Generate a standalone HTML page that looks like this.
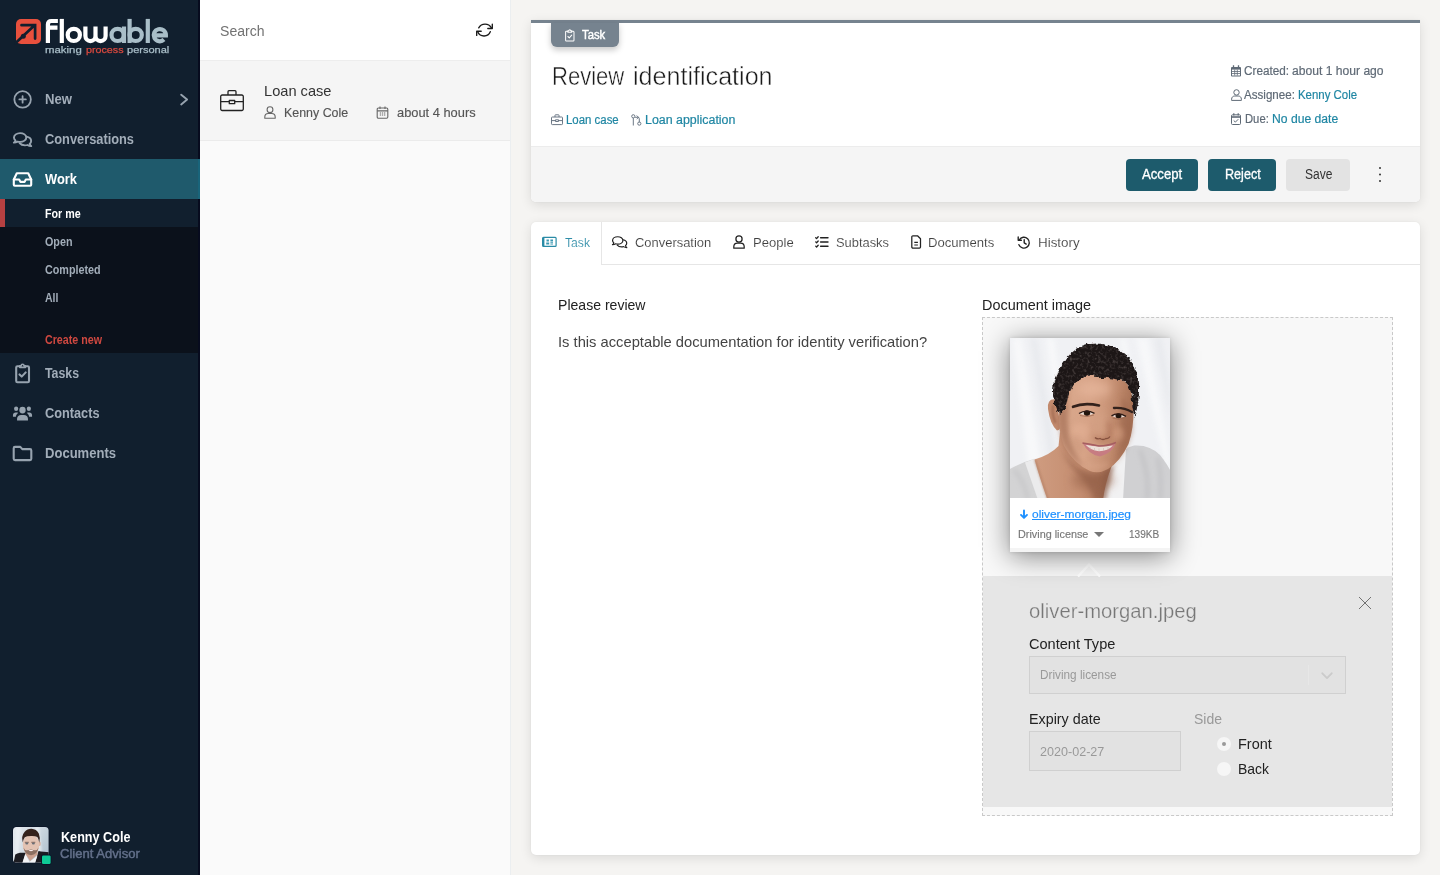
<!DOCTYPE html>
<html><head><meta charset="utf-8"><title>Flowable Work</title>
<style>
*{box-sizing:border-box;margin:0;padding:0}
html,body{width:1440px;height:875px;overflow:hidden}
body{position:relative;background:#f5f4f2;font-family:"Liberation Sans",sans-serif}
.a{position:absolute}
.t{position:absolute;white-space:pre;line-height:1em;transform-origin:0 50%;display:block}
svg{position:absolute;overflow:visible}

</style></head>
<body>
<!-- ===== sidebar ===== -->
<div class="a" style="left:0;top:0;width:200px;height:875px;background:#111f2e;border-right:2px solid #070b1e"></div>
<div class="a" style="left:0;top:159px;width:200px;height:40px;background:#1f5a6c;border-right:2px solid #19647a"></div>
<div class="a" style="left:0;top:199px;width:198px;height:154px;background:#0b111b"></div>
<div class="a" style="left:0;top:199px;width:198px;height:28px;background:#111f2e"></div>
<div class="a" style="left:0;top:199px;width:5px;height:28px;background:#b64041"></div>

<!-- logo -->
<svg style="left:0;top:0" width="200" height="70" viewBox="0 0 200 70" id="logo">
  <path d="M21 19h15a5 5 0 0 1 5 5v15a5 5 0 0 1-5 5H21l-5-1.5V24a5 5 0 0 1 5-5z" fill="#e8503d"/>
  <path d="M15.6 43 34.6 25.2M21.5 25.2h13.6v13.4" fill="none" stroke="#111f2e" stroke-width="2.7" stroke-linecap="round"/>
  <circle cx="23.3" cy="36.3" r="2.5" fill="#111f2e"/>
  <g fill="none" stroke="#fff" stroke-width="4.2">
    <path d="M47.9 43V24.5q0-3.5 3.5-3.5h6.5M47.9 27.6h9.6"/>
    <path d="M61.8 18.9V43"/>
    <circle cx="73.8" cy="34.9" r="6.1"/>
    <path d="M85.4 26.5V36a5.05 5.05 0 0 0 10.1 0V26.5M95.5 36a5.05 5.05 0 0 0 10.1 0V26.5"/>
  </g>
  <g fill="none" stroke="#a9bec8" stroke-width="4.2">
    <circle cx="117.6" cy="34.9" r="6.1"/><path d="M124 26.5V43"/>
    <path d="M129.6 18.9V43"/><circle cx="135.7" cy="34.9" r="6.1"/>
    <path d="M147.8 18.9V43"/>
    <path d="M154 35.4h11.9a6.1 6.1 0 1 0-1.9 4.2"/>
  </g>
</svg>

<!-- sidebar icons -->
<svg style="left:0;top:79px" width="200" height="400" viewBox="0 79 200 400" fill="none" stroke="#97a3af" stroke-width="1.8" stroke-linecap="round" stroke-linejoin="round" id="sideicons">
  <circle cx="22.600" cy="99.450" r="8.250"/><path d="M22.600 96.200v6.500M19.350 99.450h6.500"/>
  <path d="M181.200 94.700l5.900 4.900-5.900 4.900" stroke-width="1.900"/>
  <!-- conversations -->
<g transform="matrix(.95 0 0 .875 1.130 18.010)" stroke-width="2">  <path d="M20 131.5c-3.6 0-6.5 2.3-6.5 5.1 0 1.300.6 2.400 1.600 3.300-.300 1-.9 1.900-1.700 2.600 1.500 0 2.900-.500 4-1.300.800.300 1.700.400 2.600.400 3.600 0 6.500-2.300 6.500-5.100s-2.900-5-6.500-5z"/>
  <path d="M26.700 135.600c2.800.500 4.900 2.500 4.900 4.900 0 1.300-.6 2.400-1.600 3.300.300 1 .9 1.900 1.700 2.600-1.500 0-2.900-.500-4-1.300-.800.300-1.700.400-2.600.400-2.400 0-4.500-1-5.600-2.500"/></g>
  <!-- work inbox -->
  <g stroke="#fff" stroke-width="2.1"><path d="M13.800 179.500l3-6.300h11.400l3 6.300v5.200a1 1 0 0 1-1 1H14.800a1 1 0 0 1-1-1z"/><path d="M13.800 179.500h5.400l1.200 2.400h4.200l1.200-2.400h5.400"/></g>
  <!-- tasks clipboard -->
<g stroke-width="2.100"><path d="M19.600 366.200h-2.200a1.200 1.200 0 0 0-1.200 1.200v13.600a1.200 1.200 0 0 0 1.200 1.200h10.400a1.200 1.200 0 0 0 1.200-1.200v-13.600a1.200 1.200 0 0 0-1.200-1.200h-2.200"/>
  <path d="M19.800 367.400v-1.700h1.400a1.400 1.400 0 0 1 2.800 0h1.400v1.700z" stroke-width="1.600"/>
  <path d="M19.500 374.400l2.200 2.200 4-4.200"/></g>
  <!-- contacts -->
  <g fill="#97a3af" stroke="none" transform="matrix(.91 0 0 .97 2.030 12.700)"><circle cx="22.500" cy="409.700" r="3.500"/><path d="M16.500 420.500v-1.800c0-2.400 2-4 4.400-4h3.200c2.400 0 4.400 1.600 4.400 4v1.800z"/><circle cx="15.500" cy="408.300" r="2.300"/><circle cx="29.500" cy="408.300" r="2.300"/><path d="M12 416.500v-1.600c0-1.600 1.300-2.700 2.900-2.700h1.400c.5 0 1 .1 1.400.4-1.500 1-2.400 2.400-2.500 3.900zM33 416.500v-1.600c0-1.600-1.300-2.700-2.900-2.700h-1.400c-.5 0-1 .1-1.400.4 1.500 1 2.400 2.400 2.500 3.900z"/></g>
  <!-- documents folder -->
  <path d="M15 446.900h5.300l2 2.200h7.700a1.300 1.300 0 0 1 1.300 1.300v8.400a1.300 1.300 0 0 1-1.300 1.300H15a1.300 1.300 0 0 1-1.300-1.300V448.200a1.300 1.300 0 0 1 1.300-1.300z" stroke-width="2.100"/>
</svg>

<!-- user avatar -->
<svg style="left:12.700px;top:827.400px" width="39" height="39" viewBox="0 0 39 39" id="avatar">
  <defs><clipPath id="avc"><rect x="0" y="0" width="35.600" height="35.600" rx="3.500"/></clipPath>
  <linearGradient id="avbg" x1="0" y1="0" x2="1" y2=".6"><stop offset="0" stop-color="#e4e9ee"/><stop offset=".5" stop-color="#d3dce4"/><stop offset="1" stop-color="#b4c4d1"/></linearGradient>
  <filter id="avb" filterUnits="userSpaceOnUse" x="-5" y="-5" width="50" height="50"><feGaussianBlur stdDeviation=".6"/></filter>
  <filter id="avb2" filterUnits="userSpaceOnUse" x="-5" y="-5" width="50" height="50"><feGaussianBlur stdDeviation="1.300"/></filter></defs>
  <rect x="-.7" y="-.7" width="37" height="37" rx="4.200" fill="#0a1326"/>
  <g clip-path="url(#avc)">
    <rect width="36" height="36" fill="url(#avbg)"/>
    <path d="M3 0h5l-3 36H0zM22 0h4l4 36h-5z" fill="#eef2f5" opacity=".7" filter="url(#avb2)"/>
    <g filter="url(#avb)">
    <path d="M.5 36L2.300 27.600Q4 26 7 25.700H13L9.400 36z" fill="#1b1b20"/>
    <path d="M22 36L25.500 24 28 24.600 36 25.300V36z" fill="#1b1b20"/>
    <path d="M9.400 36L12.300 26.500 16.500 35 24.500 28.500 22 36z" fill="#f4f4f5"/>
    <path d="M12 22h12.500v5.500L17 34l-4.500-7z" fill="#caa08e"/>
    <ellipse cx="26.500" cy="16.800" rx="1.300" ry="2.300" fill="#d9b3a2"/>
    <ellipse cx="18" cy="17.800" rx="8.300" ry="10.300" fill="#e3c3b3"/>
    <path d="M10.500 20.500Q11.500 27.500 18 28.300 24.500 27.500 25.500 20.500 24 24.500 20.500 22.800 18 22 15.500 22.800 12 24.500 10.500 20.500z" fill="#7d6053" opacity=".85"/>
    <path d="M14.800 22.600Q18 25.800 21.200 22.600 18 23.400 14.800 22.600z" fill="#fbeeee"/>
    <path d="M9.800 15.500Q8 9 11.500 5 14.500 1.500 18.500 1.700 23.500 2 25.800 6.500 27.500 10.500 26.300 15.800 25.800 12 24.300 10 22 8.800 18 9 13.500 9 11.800 10.200 10.300 12.300 9.800 15.500z" fill="#35241f"/>
    <path d="M11.800 15.300h4M18.300 15.300h4" stroke="#6d5348" stroke-width=".8"/>
    <ellipse cx="13.800" cy="16.500" rx="1.500" ry=".9" fill="#6b6f78"/><ellipse cx="20.400" cy="16.500" rx="1.500" ry=".9" fill="#6b6f78"/>
    </g>
  </g>
  <rect x="28.200" y="27.600" width="10.200" height="10.200" rx="2" fill="#0a1326"/>
  <rect x="29" y="28.400" width="8.600" height="8.600" rx="1.300" fill="#0ecb97"/>
</svg>

<!-- ===== list panel ===== -->
<div class="a" style="left:200px;top:0;width:311px;height:875px;background:#fafafa;border-right:1px solid #ebeef0"></div>
<div class="a" style="left:200px;top:0;width:310px;height:61px;background:#fff;border-bottom:1px solid #ededed"></div>
<div class="a" style="left:200px;top:61px;width:310px;height:80px;background:#f5f5f5;border-bottom:1px solid #ebebeb"></div>
<svg style="left:475.800px;top:22.200px" width="17" height="15" viewBox="0 0 17 15" fill="none" stroke="#1a1a1a" stroke-width="1.350" stroke-linecap="round" stroke-linejoin="round" id="refresh">
  <path d="M2.700 5.800A7.300 7.300 0 0 1 15.400 5.800M14.300 9.700A6.800 6.800 0 0 1 1.800 10"/><path d="M16.300 2.200V6.500H11.800M.700 13.400V9.200H5.200"/>
</svg>
<svg style="left:220px;top:90px" width="24" height="22" viewBox="0 0 24 22" fill="none" stroke="#222" stroke-width="1.3" stroke-linejoin="round" id="brief">
  <path d="M2.200 5h19.600a1.500 1.500 0 0 1 1.500 1.500v12.500a1.500 1.500 0 0 1-1.500 1.500H2.200a1.500 1.500 0 0 1-1.500-1.500V6.500A1.500 1.500 0 0 1 2.200 5z"/><path d="M8 5V1.700a1 1 0 0 1 1-1h6a1 1 0 0 1 1 1V5"/><path d="M.7 11.700h8.600M14.700 11.700h8.600M9.300 10.500h5.400v3.200H9.300z"/>
</svg>
<svg style="left:264px;top:106px" width="12" height="13" viewBox="0 0 12 13" fill="none" stroke="#666" stroke-width="1.100" id="lu">
  <circle cx="6" cy="3.700" r="2.900"/><path d="M.8 12.300v-1.300c0-2.300 1.700-3.500 3.500-3.500h3.400c1.800 0 3.500 1.200 3.500 3.500v1.300z" stroke-linejoin="round"/>
</svg>
<svg style="left:376px;top:106px" width="13" height="13" viewBox="0 0 13 13" fill="none" stroke="#666" stroke-width="1.100" id="lc">
  <rect x="1.200" y="2" width="10.600" height="10.300" rx="1.200"/><path d="M1.200 4.900h10.600M4 .5v2.500M9 .5v2.500"/><path d="M3.800 7h1.300M5.900 7h1.300M8 7h1.300M3.800 9h1.300M5.900 9h1.300M8 9h1.300" stroke-width="1.200"/>
</svg>

<!-- ===== header card ===== -->
<div class="a" style="left:531px;top:20px;width:889px;height:182px;background:#fff;border-top:3px solid #76838f;border-radius:0 0 5px 5px;box-shadow:0 3px 12px rgba(0,0,0,.11),0 0 2px rgba(0,0,0,.05);overflow:hidden"><div class="a" style="left:0;top:123px;width:889px;height:56px;background:#f5f5f5;border-top:1px solid #ececec"></div></div>
<div class="a" style="left:551px;top:23px;width:68px;height:24px;background:#76838f;border-radius:0 0 6px 6px;box-shadow:0 3px 6px rgba(0,0,0,.22)"></div>
<svg style="left:564.800px;top:28.900px" width="9.600" height="12.800" viewBox="0 0 11 14" preserveAspectRatio="none" fill="none" stroke="#fff" stroke-width="1.150" stroke-linejoin="round" stroke-linecap="round" id="badgeic">
  <path d="M3.300 2.500H1.500a.8.8 0 0 0-.8.800v9a.8.8 0 0 0 .8.800h8a.8.8 0 0 0 .8-.8v-9a.8.8 0 0 0-.8-.8H7.700"/><path d="M3.300 3.600V2h1.100a1.100 1.100 0 0 1 2.200 0h1.100v1.600z"/><path d="M3.300 8.200l1.600 1.500 2.800-3"/>
</svg>
<!-- header link icons -->
<svg style="left:551px;top:114px" width="12" height="12" viewBox="0 0 12 12" fill="none" stroke="#6b7785" stroke-width="1" stroke-linejoin="round" id="hl1">
  <path d="M1.300 3h9.400a.8.8 0 0 1 .8.800v6a.8.8 0 0 1-.8.800H1.300a.8.8 0 0 1-.8-.8v-6a.8.8 0 0 1 .8-.8z"/><path d="M4 3V1.300a.5.5 0 0 1 .5-.5h3a.5.5 0 0 1 .5.5V3M.5 6.600h4M7.500 6.600h4M4.500 5.800h3v1.700h-3z"/>
</svg>
<svg style="left:631px;top:114px" width="11" height="12" viewBox="0 0 11 12" fill="none" stroke="#6b7785" stroke-width="1" id="hl2">
  <circle cx="2.300" cy="2.300" r="1.600"/><path d="M2.300 3.900v7.600"/><circle cx="8.300" cy="9.600" r="1.600"/><path d="M6 1.800l1.500 1.500-1.500 1.500M4.500 3.300h2.300a1.500 1.500 0 0 1 1.500 1.500V8" stroke-linecap="round" stroke-linejoin="round"/>
</svg>
<!-- header meta icons -->
<svg style="left:1231px;top:65px" width="10" height="12" viewBox="0 0 10 12" id="hm1"><path d="M1 2h8a1 1 0 0 1 1 1v7.500a1 1 0 0 1-1 1H1a1 1 0 0 1-1-1V3a1 1 0 0 1 1-1z" fill="#5f6a76"/><path d="M2.500.3v2.500M7.500.3v2.500" stroke="#5f6a76" stroke-width="1.300"/><path d="M1 4.600h8v5.900H1z" fill="#fff"/><path d="M1 6.500h8M1 8.500h8M3.700 4.600v5.900M6.300 4.600v5.900" stroke="#5f6a76" stroke-width=".8"/></svg>
<svg style="left:1231px;top:89px" width="11" height="12" viewBox="0 0 11 12" fill="none" stroke="#5f6a76" stroke-width="1" id="hm2"><circle cx="5.500" cy="3.400" r="2.700"/><path d="M.6 11.400v-1.200c0-2.100 1.500-3.200 3.200-3.200h3.400c1.700 0 3.200 1.100 3.200 3.200v1.200z" stroke-linejoin="round"/></svg>
<svg style="left:1231px;top:113px" width="10" height="12" viewBox="0 0 10 12" fill="none" stroke="#5f6a76" stroke-width="1" id="hm3"><rect x=".5" y="1.800" width="9" height="9.700" rx="1"/><path d="M.5 4h9" stroke-width="1.600"/><path d="M2.800.3v2.200M7.200.3v2.200" stroke-width="1.200"/><path d="M3 7.800l1.400 1.300L7 6.500" stroke-linecap="round" stroke-linejoin="round"/></svg>
<!-- buttons -->
<div class="a" style="left:1126px;top:159px;width:72px;height:32px;background:#1d5b6c;border-radius:4px"></div>
<div class="a" style="left:1208px;top:159px;width:68px;height:32px;background:#1d5b6c;border-radius:4px"></div>
<div class="a" style="left:1286px;top:159px;width:64px;height:32px;background:#e3e3e3;border-radius:4px"></div>
<div class="a" style="left:1378.700px;top:166.500px;width:2.800px;height:2.800px;background:#333;border-radius:2px;box-shadow:0 6.500px 0 #333,0 13px 0 #333"></div>

<!-- ===== tab card ===== -->
<div class="a" style="left:531px;top:222px;width:889px;height:633px;background:#fff;border-radius:5px;box-shadow:0 3px 12px rgba(0,0,0,.11),0 0 2px rgba(0,0,0,.05)"></div>
<div class="a" style="left:601px;top:222px;width:819px;height:43px;border-left:1px solid #e6e6e6;border-bottom:1px solid #e6e6e6"></div>
<!-- tab icons -->
<svg style="left:542.300px;top:236px" width="15" height="12" viewBox="0 0 15 12" fill="none" stroke="#2a8ba6" stroke-width="1.200" id="ti1"><rect x=".6" y="1.300" width="13.500" height="9.100" rx=".9"/><path d="M1.700 1.300v9.100" stroke-width="1.400"/><path d="M4.500 3.600h2.400v1.800H4.500zM4.200 6.400h3v2H4.200zM8.400 3.600h2.600v1.300H8.400zM8.400 5.600h2.600v1.100H8.400zM8.400 7.400h2.600v1H8.400z" fill="#3a97b1" stroke="none"/></svg>
<svg style="left:611.700px;top:235.800px" width="15.300" height="12.300" viewBox="0 0 16 14" preserveAspectRatio="none" fill="none" stroke="#222" stroke-width="1.250" stroke-linejoin="round" stroke-linecap="round" id="ti2">
  <path d="M6 .800C3 .800.600 2.700.600 5c0 1.100.500 2 1.300 2.800-.200.800-.700 1.600-1.400 2.200 1.300 0 2.400-.400 3.400-1.100.700.200 1.400.300 2.100.300 3 0 5.400-1.900 5.400-4.200S9 .800 6 .800z"/><path d="M11.600 4.300c2.200.500 3.800 2 3.800 3.900 0 1.100-.500 2-1.300 2.800.200.800.700 1.600 1.400 2.200-1.300 0-2.400-.400-3.400-1.100-.700.200-1.400.300-2.100.300-1.900 0-3.600-.800-4.500-2"/>
</svg>
<svg style="left:733px;top:235px" width="12" height="14" viewBox="0 0 12 14" fill="none" stroke="#222" stroke-width="1.250" id="ti3"><circle cx="6" cy="3.900" r="3.100"/><path d="M.800 13.200v-1.400c0-2.400 1.700-3.700 3.600-3.700h3.200c1.900 0 3.600 1.300 3.600 3.700v1.400z" stroke-linejoin="round"/></svg>
<svg style="left:815px;top:236px" width="14" height="12" viewBox="0 0 14 12" fill="none" stroke="#222" stroke-width="1.400" stroke-linecap="round" stroke-linejoin="round" id="ti4"><path d="M5.600 1.800h7.400M5.600 6h7.400M5.600 10.200h7.400"/><path d="M.700 1.700l.9.900L3.200.800M.700 5.900l.9.900L3.200 5M.700 10.100l.9.900 1.600-1.800" stroke-width="1.300"/></svg>
<svg style="left:910.500px;top:235px" width="11" height="14" viewBox="0 0 11 14" fill="none" stroke="#222" stroke-width="1.250" stroke-linejoin="round" id="ti5"><path d="M1.900.800h4.600l3 3v8.300a1.100 1.100 0 0 1-1.100 1.100H1.900a1.100 1.100 0 0 1-1.100-1.100V1.900A1.100 1.100 0 0 1 1.900.800z"/><path d="M3.300 7.300h3.600M3.300 10h3.600" stroke-width="1.200"/></svg>
<svg style="left:1016.500px;top:235.500px" width="14" height="13" viewBox="0 0 14 13" fill="none" stroke="#222" stroke-width="1.350" stroke-linecap="round" stroke-linejoin="round" id="ti6"><path d="M2.300 3.800A5.400 5.400 0 1 1 1.900 8.700"/><path d="M1.200 1v3.200h3.200"/><path d="M7.200 3.700v3.100l2 1.300" stroke-width="1.400"/></svg>

<!-- ===== document area ===== -->
<div class="a" style="left:982px;top:317px;width:411px;height:499px;background:#f8f8f8;border:1px dashed #c9c9c9"></div>
<div class="a" style="left:983px;top:576px;width:409px;height:231px;background:#e6e6e6"></div>
<svg style="left:1077px;top:563px" width="24" height="14" viewBox="0 0 24 14" fill="none" stroke="#fff" stroke-width="2.400" id="ptr"><path d="M1 13.500L12 1.500l11 12"/></svg>
<!-- image card -->
<div class="a" style="left:1010px;top:338px;width:160px;height:214px;background:#fff;box-shadow:0 4px 26px rgba(0,0,0,.48),0 0 4px rgba(0,0,0,.12)"><div class="a" style="left:0;bottom:0;width:160px;height:4px;background:#f4f4f4"></div></div>
<svg style="left:1010px;top:338px" width="160" height="160" viewBox="0 0 160 160" id="photo">
  <defs>
    <clipPath id="pc"><rect width="160" height="160"/></clipPath>
    <filter id="pb0" filterUnits="userSpaceOnUse" x="-20" y="-20" width="200" height="200"><feGaussianBlur stdDeviation=".5"/></filter>
    <filter id="pb1" filterUnits="userSpaceOnUse" x="-20" y="-20" width="200" height="200"><feGaussianBlur stdDeviation="1"/></filter>
    <filter id="pb2" filterUnits="userSpaceOnUse" x="-20" y="-20" width="200" height="200"><feGaussianBlur stdDeviation="2.500"/></filter>
    <filter id="pb3" filterUnits="userSpaceOnUse" x="-20" y="-20" width="200" height="200"><feGaussianBlur stdDeviation="5"/></filter>
    <filter id="phair" x="-10%" y="-10%" width="120%" height="120%"><feTurbulence type="fractalNoise" baseFrequency=".22" numOctaves="2" seed="7" result="n"/><feDisplacementMap in="SourceGraphic" in2="n" scale="5" xChannelSelector="R" yChannelSelector="G"/><feGaussianBlur stdDeviation=".45"/></filter>
    <filter id="pcurl" x="0" y="0" width="100%" height="100%"><feTurbulence type="fractalNoise" baseFrequency=".35" numOctaves="2" seed="3"/><feColorMatrix type="matrix" values="0 0 0 0 .32  0 0 0 0 .26  0 0 0 0 .25  1.600 0 0 0 -.75"/><feComposite in2="SourceGraphic" operator="in"/></filter>
    <linearGradient id="pface" x1="0" y1="0" x2="1" y2=".15"><stop offset="0" stop-color="#c18c70"/><stop offset=".22" stop-color="#d8a68a"/><stop offset=".45" stop-color="#d7a387"/><stop offset=".65" stop-color="#cc977a"/><stop offset=".82" stop-color="#bd876a"/><stop offset="1" stop-color="#a87256"/></linearGradient>
    <linearGradient id="pneck" x1="0" y1="0" x2="1" y2="0"><stop offset="0" stop-color="#cf9c80"/><stop offset=".55" stop-color="#c48d70"/><stop offset="1" stop-color="#a06a50"/></linearGradient>
  </defs>
  <g clip-path="url(#pc)">
    <rect width="160" height="160" fill="#f0f1f4"/>
    <g filter="url(#pb2)" opacity=".7"><path d="M2 0h10l24 160H22zM36 0h8l16 100H50zM126 0h12l22 120v30zM110 0h6l10 60h-6z" fill="#fafbfc"/><path d="M20 0h7l22 130h-9zM144 0h8l8 50v30z" fill="#e6e8ec"/></g>
    <!-- shirt -->
    <g filter="url(#pb0)">
    <path d="M-2 132 Q12 124 24 121 L42 162H-2z" fill="#d3d3d4"/>
    <path d="M94 162 L107 122 Q113 110 124 107.500 Q140 106.500 150 117 Q158 127 162 136V162z" fill="#d0d0d2"/>
    <path d="M92 162 L103 126 Q108 116 116 111 L113 162z" fill="#f1f1f2"/>
    <path d="M15 124.500 L24 121 L38 162H28z" fill="#ebebec"/>
    </g>
    <path d="M130 112 Q140 138 137 162M148 120 Q152 140 150 162" stroke="#bdbdc0" stroke-width="2.500" fill="none" filter="url(#pb2)"/>
    <path d="M4 132 Q14 142 18 162" stroke="#c2c2c4" stroke-width="2.500" fill="none" filter="url(#pb2)"/>
    <!-- neck / chest -->
    <path d="M24.500 121.500 Q40 117 48.500 108 L50 94 L108 110 L101 130 Q95 146 93 162 L37.500 162 Q29 138 24.500 121.500z" fill="url(#pneck)" filter="url(#pb0)"/>
    <path d="M50 108 Q60 128 82 138 Q96 138 106 122 L100 134 Q95 148 94 162 H84 Q80 146 66 134 Q56 124 50 108z" fill="#8f5c45" opacity=".6" filter="url(#pb2)"/>
    <ellipse cx="83" cy="142" rx="21" ry="9" fill="#96624a" opacity=".55" filter="url(#pb3)"/>
    <path d="M101 128 Q95 146 93.500 162" stroke="#84543f" stroke-width="6" fill="none" opacity=".5" filter="url(#pb2)"/>
    <path d="M25 122 Q31 140 38 162" stroke="#a8745a" stroke-width="1.500" fill="none" opacity=".7" filter="url(#pb1)"/>
    <!-- ear -->
    <path d="M46 61.500 Q37 60 38 71 Q40 86 47 92.500 Q52 92 50 84z" fill="#c28a6d" filter="url(#pb0)"/>
    <path d="M43.500 67 Q41 74 45.500 85" stroke="#9c664d" stroke-width="1.800" fill="none" filter="url(#pb1)"/>
    <!-- face -->
    <path d="M57 50 Q62 38 80 36.500 Q104 36 116 44 Q123 52 123.500 70 Q124 90 118.500 106 Q110 124 98 131 Q88 136.500 80 133 Q64 126 54 108 Q48 92 49 76 Q50 60 57 50z" fill="url(#pface)" filter="url(#pb0)"/>
    <path d="M49 74 Q48 96 55 110 Q62 122 74 130 Q63 114 59 96 Q57 84 58 62z" fill="#a06c52" opacity=".6" filter="url(#pb2)"/>
    <path d="M112 58 Q124 72 122 94 Q118 110 104 127 Q114 104 111 84z" fill="#99644b" opacity=".5" filter="url(#pb2)"/>
    <ellipse cx="84" cy="51" rx="17" ry="8" fill="#e6b69b" opacity=".75" filter="url(#pb3)"/>
    <ellipse cx="70" cy="93" rx="8" ry="8" fill="#e3b094" opacity=".6" filter="url(#pb2)"/>
    <ellipse cx="108" cy="96" rx="6" ry="7" fill="#d7a184" opacity=".5" filter="url(#pb2)"/>
    <path d="M91 74 Q93 86 92 96" stroke="#e6b79c" stroke-width="5" fill="none" opacity=".45" filter="url(#pb3)"/>
    <path d="M76 126 Q86 131 98 126" stroke="#dba98d" stroke-width="4" fill="none" opacity=".5" filter="url(#pb2)"/>
    <!-- hair -->
    <g filter="url(#phair)"><path id="phairp" d="M49.500 76 Q42 66 43 52 Q43 36 54 24 Q64 7 86 5.500 Q110 6.500 121.500 23 Q130.500 38 129 54 Q128 70 124.500 79 Q122 70 121.500 56 Q119 46 111 42.500 Q100 39 92 40 Q84 36 76 38.500 Q67 40 63 48 Q58 56 57 64 Q55 74 49.500 76z" fill="#1d1819"/></g>
    <path d="M49.500 76 Q42 66 43 52 Q43 36 54 24 Q64 7 86 5.500 Q110 6.500 121.500 23 Q130.500 38 129 54 Q128 70 124.500 79 Q122 70 121.500 56 Q119 46 111 42.500 Q100 39 92 40 Q84 36 76 38.500 Q67 40 63 48 Q58 56 57 64 Q55 74 49.500 76z" fill="#000" filter="url(#pcurl)" opacity=".55"/>
    <!-- brows -->
    <path d="M63 68.800 Q74 64.200 89 67.500" stroke="#33211c" stroke-width="2.600" fill="none" stroke-linecap="round" filter="url(#pb0)"/>
    <path d="M104 70 Q114 69.300 122 74" stroke="#33211c" stroke-width="2.400" fill="none" stroke-linecap="round" filter="url(#pb0)"/>
    <!-- eyes -->
    <g filter="url(#pb0)"><path d="M69.500 75.500 Q76 71 84 75.500 Q77 78.500 69.500 75.500z" fill="#eaddd6"/><ellipse cx="77" cy="75" rx="3.200" ry="2.700" fill="#21130f"/><path d="M69 75.500 Q76 70.800 84.500 75.300" stroke="#2c1a15" stroke-width="1.400" fill="none"/><path d="M70 77.500 Q77 80 84 77" stroke="#9a6850" stroke-width="1" fill="none" opacity=".7"/>
    <path d="M102 78 Q108 74 115.500 78.500 Q108 81 102 78z" fill="#eaddd6"/><ellipse cx="108.500" cy="77.800" rx="3" ry="2.500" fill="#21130f"/><path d="M101.500 77.800 Q108 73.800 116 78.300" stroke="#2c1a15" stroke-width="1.400" fill="none"/><path d="M102.500 80 Q109 82.500 115 80" stroke="#9a6850" stroke-width="1" fill="none" opacity=".7"/></g>
    <!-- nose -->
    <path d="M98 84 Q100.500 93 99.500 97 Q97 101.500 91.500 102 Q86 101.500 84 98" stroke="#a2644b" stroke-width="3" fill="none" opacity=".55" filter="url(#pb2)"/>
    <path d="M85 99.500 Q87 101.500 90 100.500 Q93 102.500 96 100.500 Q98.500 101 100 98.500" stroke="#84503d" stroke-width="1.300" fill="none" filter="url(#pb0)"/>
    <!-- mouth -->
    <g filter="url(#pb0)"><path d="M72.500 105 Q80 105.500 89 107.500 Q98 107.500 106 104.500 Q103 115 90 118.500 Q79 117 72.500 105z" fill="#c77c82"/><path d="M75.500 106.800 Q88 110 103 107.500 Q98 113 89 113.200 Q81 112.500 75.500 106.800z" fill="#ece0d8"/><path d="M72.500 105 Q80 105.800 89 108 Q98 108 106 104.500" stroke="#a55e60" stroke-width="1.500" fill="none"/><path d="M80 109v3M84.500 110v3M89 110.500v2.500M93.500 110v3M98 109v3" stroke="#c9b3a8" stroke-width=".5"/></g>
    <path d="M67 97 Q66 106 71 113M110 98 Q111 108 106 114" stroke="#a97359" stroke-width="1.500" fill="none" opacity=".45" filter="url(#pb2)"/>
  </g>
</svg>
<svg style="left:1020px;top:509.300px" width="8" height="10" viewBox="0 0 8 10" fill="none" stroke="#1e90ff" stroke-width="1.900" stroke-linecap="round" stroke-linejoin="round" id="dl"><path d="M4 1.500v7M1 5.900L4 8.900l3-3"/></svg>
<div class="a" style="left:1094.200px;top:532px;width:0;height:0;border-left:5px solid transparent;border-right:5px solid transparent;border-top:5.300px solid #777"></div>
<!-- panel widgets -->
<svg style="left:1358px;top:596px" width="14" height="14" viewBox="0 0 14 14" stroke="#6a6a6a" stroke-width=".95" id="closex"><path d="M1 1l12 12M13 1L1 13"/></svg>
<div class="a" style="left:1029px;top:656px;width:317px;height:38px;background:#e2e2e2;border:1px solid #d0d0d0"></div>
<div class="a" style="left:1308px;top:665px;width:1px;height:20px;background:#e7e7e7"></div>
<svg style="left:1321px;top:671.500px" width="12" height="8" viewBox="0 0 12 8" fill="none" stroke="#cbcbcb" stroke-width="1.900" stroke-linecap="round" stroke-linejoin="round" id="selchev"><path d="M1.300 1.300l4.700 4.800 4.700-4.800"/></svg>
<div class="a" style="left:1029px;top:731px;width:152px;height:40px;background:#e2e2e2;border:1px solid #d0d0d0"></div>
<div class="a" style="left:1216.500px;top:737px;width:14px;height:14px;border-radius:7px;background:#f6f6f6"></div>
<div class="a" style="left:1221.500px;top:742px;width:4px;height:4px;border-radius:2px;background:#9a9a9a"></div>
<div class="a" style="left:1216.500px;top:762px;width:14px;height:14px;border-radius:7px;background:#f6f6f6"></div>

<!-- text -->
<span class="t" style="left:44.8px;top:45.26px;font-size:9.5px;color:#a9bec8;transform:scaleX(1.2016);-webkit-text-stroke:.25px #a9bec8;">making</span>
<span class="t" style="left:85.7px;top:45.26px;font-size:9.5px;color:#d8493f;transform:scaleX(1.1273);-webkit-text-stroke:.25px #d8493f;">process</span>
<span class="t" style="left:126.5px;top:45.26px;font-size:9.5px;color:#a9bec8;transform:scaleX(1.1604);-webkit-text-stroke:.25px #a9bec8;">personal</span>
<span class="t" style="left:45.3px;top:92.33px;font-size:14.5px;color:#a2adb9;font-weight:700;transform:scaleX(0.9052);">New</span>
<span class="t" style="left:45.3px;top:132.33px;font-size:14.5px;color:#a2adb9;font-weight:700;transform:scaleX(0.8835);">Conversations</span>
<span class="t" style="left:45.3px;top:172.33px;font-size:14.5px;color:#fff;font-weight:700;transform:scaleX(0.8889);">Work</span>
<span class="t" style="left:44.6px;top:207.64px;font-size:12px;color:#fff;font-weight:700;transform:scaleX(0.8922);">For me</span>
<span class="t" style="left:44.6px;top:235.64px;font-size:12px;color:#a2adb9;font-weight:700;transform:scaleX(0.8966);">Open</span>
<span class="t" style="left:44.6px;top:263.64px;font-size:12px;color:#a2adb9;font-weight:700;transform:scaleX(0.8982);">Completed</span>
<span class="t" style="left:44.6px;top:291.64px;font-size:12px;color:#a2adb9;font-weight:700;transform:scaleX(0.8798);">All</span>
<span class="t" style="left:44.6px;top:333.64px;font-size:12px;color:#cf4840;font-weight:700;transform:scaleX(0.8902);">Create new</span>
<span class="t" style="left:45.3px;top:366.33px;font-size:14.5px;color:#a2adb9;font-weight:700;transform:scaleX(0.8490);">Tasks</span>
<span class="t" style="left:45.3px;top:406.33px;font-size:14.5px;color:#a2adb9;font-weight:700;transform:scaleX(0.8784);">Contacts</span>
<span class="t" style="left:45.3px;top:446.33px;font-size:14.5px;color:#a2adb9;font-weight:700;transform:scaleX(0.8991);">Documents</span>
<span class="t" style="left:61px;top:830.15px;font-size:14px;color:#fff;font-weight:700;transform:scaleX(0.9011);">Kenny Cole</span>
<span class="t" style="left:60.3px;top:847.20px;font-size:13px;color:#63708a;transform:scaleX(1.0040);-webkit-text-stroke:.45px #63708a;">Client Advisor</span>
<span class="t" style="left:220px;top:24.15px;font-size:14px;color:#727272;transform:scaleX(1.0040);">Search</span>
<span class="t" style="left:264.4px;top:83.30px;font-size:15px;color:#333;transform:scaleX(0.9749);">Loan case</span>
<span class="t" style="left:284.4px;top:106.10px;font-size:13px;color:#555;transform:scaleX(0.9551);-webkit-text-stroke:.15px #555;">Kenny Cole</span>
<span class="t" style="left:397.3px;top:106.10px;font-size:13px;color:#555;transform:scaleX(0.9885);-webkit-text-stroke:.15px #555;">about 4 hours</span>
<span class="t" style="left:582px;top:28.72px;font-size:12.5px;color:#fff;transform:scaleX(0.9026);-webkit-text-stroke:.45px #fff;">Task</span>
<span class="t" style="left:551.5px;top:63.84px;font-size:25px;color:#1a1a1a;transform:scaleX(0.8819);-webkit-text-stroke:.45px #fff;">Review</span>
<span class="t" style="left:632.6px;top:63.84px;font-size:25px;color:#1a1a1a;transform:scaleX(1.0044);-webkit-text-stroke:.45px #fff;">identification</span>
<span class="t" style="left:566.3px;top:113.74px;font-size:12px;color:#1f86a3;transform:scaleX(0.9514);-webkit-text-stroke:.2px #1f86a3;">Loan case</span>
<span class="t" style="left:644.6px;top:113.74px;font-size:12px;color:#1f86a3;transform:scaleX(1.0343);-webkit-text-stroke:.2px #1f86a3;">Loan application</span>
<span class="t" style="left:1243.9px;top:65.42px;font-size:12.5px;color:#5f6a76;transform:scaleX(0.9384);-webkit-text-stroke:.2px #5f6a76;">Created:</span>
<span class="t" style="left:1291.6px;top:65.42px;font-size:12.5px;color:#5f6a76;transform:scaleX(0.9690);-webkit-text-stroke:.2px #5f6a76;">about 1 hour ago</span>
<span class="t" style="left:1244.1px;top:89.42px;font-size:12.5px;color:#5f6a76;transform:scaleX(0.9268);-webkit-text-stroke:.2px #5f6a76;">Assignee: </span>
<span class="t" style="left:1298.2px;top:89.42px;font-size:12.5px;color:#1f86a3;transform:scaleX(0.9145);-webkit-text-stroke:.2px #1f86a3;">Kenny Cole</span>
<span class="t" style="left:1244.6px;top:113.42px;font-size:12.5px;color:#5f6a76;transform:scaleX(0.8999);-webkit-text-stroke:.2px #5f6a76;">Due: </span>
<span class="t" style="left:1271.5px;top:113.42px;font-size:12.5px;color:#1f86a3;transform:scaleX(0.9720);-webkit-text-stroke:.2px #1f86a3;">No due date</span>
<span class="t" style="left:1142.3px;top:167.45px;font-size:14px;color:#fff;transform:scaleX(0.9390);-webkit-text-stroke:.3px #fff;">Accept</span>
<span class="t" style="left:1224.5px;top:167.45px;font-size:14px;color:#fff;transform:scaleX(0.8995);-webkit-text-stroke:.3px #fff;">Reject</span>
<span class="t" style="left:1304.5px;top:167.45px;font-size:14px;color:#333;transform:scaleX(0.8583);">Save</span>
<span class="t" style="left:564.6px;top:236.00px;font-size:13px;color:#2f8da8;transform:scaleX(0.9351);-webkit-text-stroke:.12px #fff;">Task</span>
<span class="t" style="left:634.6px;top:236.00px;font-size:13px;color:#3f3f3f;transform:scaleX(0.9947);-webkit-text-stroke:.12px #fff;">Conversation</span>
<span class="t" style="left:752.5px;top:236.00px;font-size:13px;color:#3f3f3f;transform:scaleX(1.0040);-webkit-text-stroke:.12px #fff;">People</span>
<span class="t" style="left:835.8px;top:236.00px;font-size:13px;color:#3f3f3f;transform:scaleX(0.9909);-webkit-text-stroke:.12px #fff;">Subtasks</span>
<span class="t" style="left:928.3px;top:236.00px;font-size:13px;color:#3f3f3f;transform:scaleX(1.0084);-webkit-text-stroke:.12px #fff;">Documents</span>
<span class="t" style="left:1037.9px;top:236.00px;font-size:13px;color:#3f3f3f;transform:scaleX(1.0308);-webkit-text-stroke:.12px #fff;">History</span>
<span class="t" style="left:558.3px;top:297.73px;font-size:14.5px;color:#222;transform:scaleX(0.9694);">Please review</span>
<span class="t" style="left:558.3px;top:334.73px;font-size:14.5px;color:#444;transform:scaleX(1.0156);">Is this acceptable documentation for identity verification?</span>
<span class="t" style="left:982px;top:297.73px;font-size:14.5px;color:#222;transform:scaleX(0.9944);">Document image</span>
<span class="t" style="left:1031.5px;top:509.27px;font-size:11.5px;color:#1e90ff;transform:scaleX(1.0394);text-decoration:underline;-webkit-text-stroke:.2px #1e90ff;">oliver-morgan.jpeg</span>
<span class="t" style="left:1017.7px;top:529.01px;font-size:10.5px;color:#777;transform:scaleX(1.0310);-webkit-text-stroke:.15px #777;">Driving license</span>
<span class="t" style="left:1128.9px;top:529.01px;font-size:10.5px;color:#777;transform:scaleX(0.9578);-webkit-text-stroke:.15px #777;">139KB</span>
<span class="t" style="left:1028.9px;top:600.57px;font-size:20px;color:#777;transform:scaleX(1.0124);-webkit-text-stroke:.25px #e6e6e6;">oliver-morgan.jpeg</span>
<span class="t" style="left:1028.9px;top:636.83px;font-size:14.5px;color:#222;transform:scaleX(1.0040);">Content Type</span>
<span class="t" style="left:1039.6px;top:669.14px;font-size:12px;color:#999;transform:scaleX(0.9817);">Driving license</span>
<span class="t" style="left:1028.9px;top:711.93px;font-size:14.5px;color:#222;transform:scaleX(0.9869);">Expiry date</span>
<span class="t" style="left:1193.5px;top:711.93px;font-size:14.5px;color:#999;transform:scaleX(0.9645);">Side</span>
<span class="t" style="left:1039.6px;top:745.74px;font-size:12px;color:#999;transform:scaleX(1.0474);">2020-02-27</span>
<span class="t" style="left:1238.3px;top:736.93px;font-size:14.5px;color:#222;transform:scaleX(0.9958);">Front</span>
<span class="t" style="left:1238.3px;top:761.83px;font-size:14.5px;color:#222;transform:scaleX(0.9612);">Back</span>
</body></html>
